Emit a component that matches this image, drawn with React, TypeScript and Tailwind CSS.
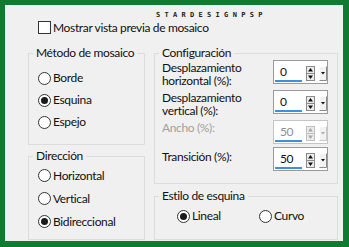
import React from "react";

const font = { fontFamily: 'Lato, "Noto Sans", sans-serif' };

function Radio({ label, checked, className = "" }: { label: string; checked?: boolean; className?: string }) {
  return (
    <div className={`flex h-[22px] items-center gap-[2px] whitespace-nowrap ${className}`}>
      <span className="flex h-[13px] w-[13px] items-center justify-center rounded-full border border-[#333333] bg-white">
        {checked && <span className="h-[7px] w-[7px] rounded-full bg-[#1a1a1a]" />}
      </span>
      <span className="text-[12px] leading-[16px] text-[#111]">{label}</span>
    </div>
  );
}

function Group({ title, className, children }: { title: string; className: string; children: React.ReactNode }) {
  return (
    <div className={`relative border border-[#dcdcdc] ${className}`}>
      <span className="absolute -top-[9px] left-[4px] whitespace-nowrap bg-[#f0f0f0] px-[3px] text-[12px] leading-[16px] text-[#111]">
        {title}
      </span>
      {children}
    </div>
  );
}

function Spinner({ value, disabled }: { value: string; disabled?: boolean }) {
  const ink = disabled ? "#a8a8a8" : "#111111";
  return (
    <div
      className={`flex h-[24px] w-[55px] shrink-0 border bg-white ${
        disabled ? "border-[#c4c4c4]" : "border-[#9a9a9a]"
      }`}
    >
      <div className="flex w-[31px] flex-col justify-between pb-[1px] pl-[1px] pt-[4px]">
        <span className={`pl-[5px] text-[12px] leading-[14px] ${disabled ? "text-[#8f8f8f]" : "text-[#111]"}`}>
          {value}
        </span>
        <span className="h-[2px] w-[27px] bg-[#3d8fe0]" />
      </div>
      <div className="ml-[1px] flex items-start gap-[4px] pt-[5px]">
        <svg width="9" height="15" viewBox="0 0 9 15">
          <rect x="0.5" y="0.5" width="8" height="14" fill="#ececec" stroke={disabled ? "#c0c0c0" : "#8a8a8a"} />
          <line x1="1" y1="7.5" x2="8" y2="7.5" stroke={disabled ? "#c0c0c0" : "#8a8a8a"} />
          <path d="M4.5 2 L7 5.5 L2 5.5 Z" fill={ink} />
          <path d="M2 9.5 L7 9.5 L4.5 13 Z" fill={ink} />
        </svg>
        <svg width="8" height="15" viewBox="0 0 8 15">
          <rect x="0" y="0" width="8" height="15" fill="#f2f2f2" />
          <path d="M0.5 14.5 L0.5 0.5 L7.5 0.5" fill="none" stroke="#ffffff" />
          <path d="M7.5 0.5 L7.5 14.5 L0.5 14.5" fill="none" stroke={disabled ? "#c8c8c8" : "#8c8c8c"} />
          <path d="M2 6 L6 6 L4 8.5 Z" fill={ink} />
        </svg>
      </div>
    </div>
  );
}

export default function App() {
  return (
    <div
      className="h-[247px] w-[349px] bg-[#117a31] pb-[6px] pl-[5px] pr-[6px] pt-[5px] tracking-[-0.35px]"
      style={font}
    >
      <div className="flex h-full flex-col bg-[#f0f0f0] pl-[23px] pr-[5px]">
        {/* Header */}
        <div className="relative flex items-center gap-[2px] pl-[10px] pt-[16px]">
          <span
            className="absolute left-[128px] top-[7px] whitespace-nowrap text-[7px] font-bold leading-none tracking-[4.3px] text-[#222]"
            style={{ fontFamily: '"DejaVu Sans Mono", monospace' }}
          >
            STARDESIGNPSP
          </span>
          <span className="h-[13px] w-[13px] border border-[#333333] bg-white" />
          <span className="whitespace-nowrap text-[12px] leading-[13px] text-[#111]">Mostrar vista previa de mosaico</span>
        </div>

        {/* Columns */}
        <div className="mt-[19px] flex gap-[9px]">
          <div className="flex w-[117px] flex-col gap-[11px]">
            <Group title="Método de mosaico" className="h-[92px] pl-[9px] pt-[13px]">
              <Radio label="Borde" />
              <Radio label="Esquina" checked />
              <Radio label="Espejo" />
            </Group>
            <Group title="Dirección" className="h-[84px] pl-[9px] pt-[7px] [&>div]:h-[23px]">
              <Radio label="Horizontal" />
              <Radio label="Vertical" />
              <Radio label="Bidireccional" checked />
            </Group>
          </div>

          <div className="flex w-[184px] flex-col gap-[12px]">
            <Group title="Configuración" className="h-[131px] pl-[7px] pr-[9px] pt-[6px]">
              <div className="flex h-[30px] items-start justify-between whitespace-nowrap text-[12px] leading-[13px] text-[#111]">
                <span className="pt-[1px]">
                  Desplazamiento
                  <br />
                  horizontal (%):
                </span>
                <Spinner value="0" />
              </div>
              <div className="flex h-[30px] items-start justify-between whitespace-nowrap text-[12px] leading-[13px] text-[#111]">
                <span className="pt-[1px]">
                  Desplazamiento
                  <br />
                  vertical (%):
                </span>
                <Spinner value="0" />
              </div>
              <div className="flex h-[27px] items-start justify-between whitespace-nowrap text-[12px] leading-[13px] text-[#a0a0a0]">
                <span className="pt-[1px]">Ancho (%):</span>
                <Spinner value="50" disabled />
              </div>
              <div className="flex items-start justify-between whitespace-nowrap text-[12px] leading-[13px] text-[#111]">
                <span className="pt-[3px]">Transición (%):</span>
                <Spinner value="50" />
              </div>
            </Group>
            <Group title="Estilo de esquina" className="flex h-[44px] pl-[22px] pt-[8px]">
              <Radio label="Lineal" checked className="w-[82px]" />
              <Radio label="Curvo" />
            </Group>
          </div>
        </div>
      </div>
    </div>
  );
}
